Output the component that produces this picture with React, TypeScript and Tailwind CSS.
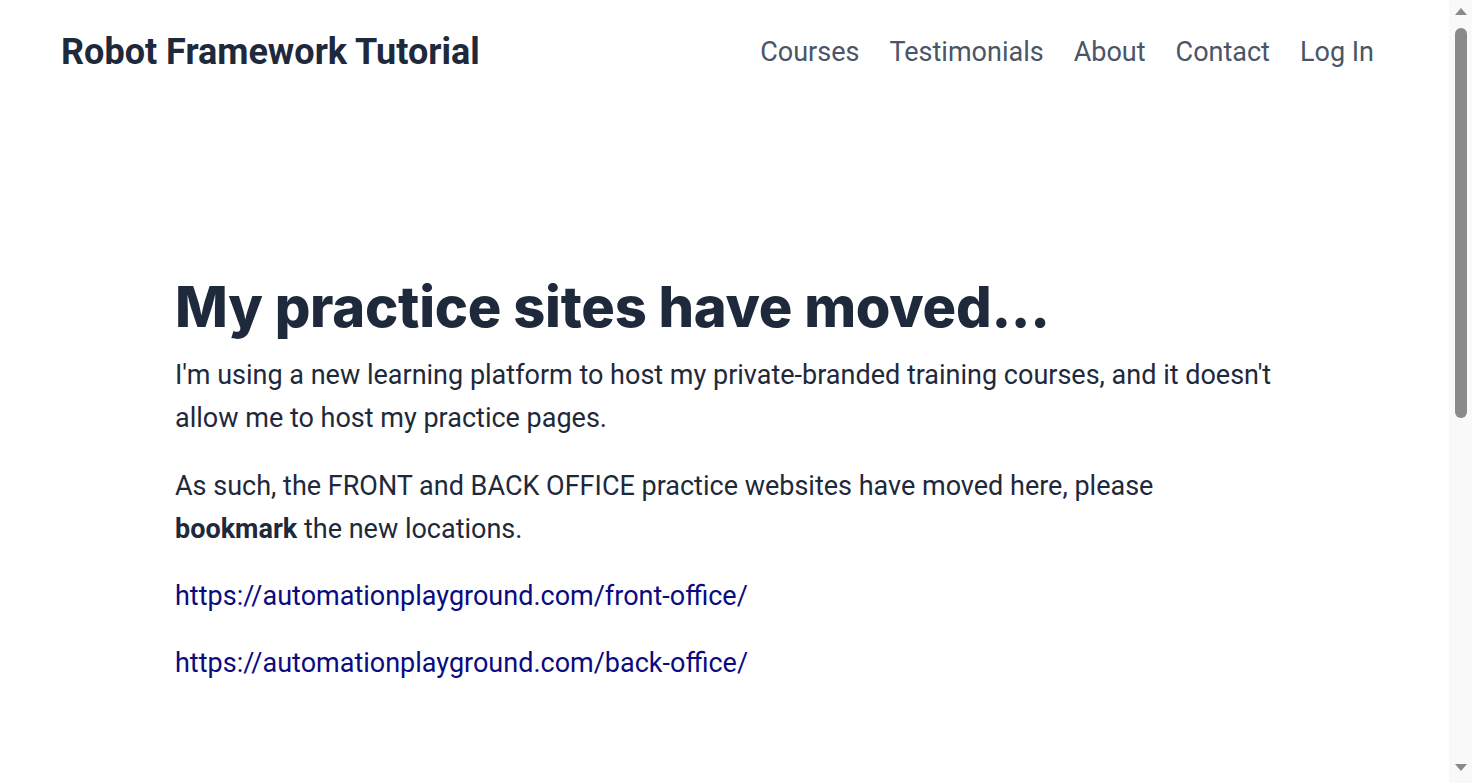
import React from "react";

function Scrollbar() {
  return (
    <div className="flex h-full w-[23px] shrink-0 flex-col items-center bg-[#f9f9f9]">
      <div className="mt-[8px] h-0 w-0 border-x-[6px] border-b-[7px] border-x-transparent border-b-[#8a8a8a]" />
      <div className="mt-[13px] h-[390px] w-[12px] rounded-full bg-[#8a8a8a]" />
      <div className="flex-1" />
      <div className="mb-[12px] h-0 w-0 border-x-[6px] border-t-[7px] border-x-transparent border-t-[#8a8a8a]" />
    </div>
  );
}

export default function App() {
  return (
    <div className="flex h-[783px] overflow-hidden bg-white text-[#1e293b]" style={{ fontFamily: "Roboto, 'Liberation Sans', sans-serif" }}>
      <div className="min-w-0 flex-1">
        <header className="flex h-[104px] items-center justify-between pl-[61px] pr-[75px]">
          <div className="text-[36px] font-bold text-[#1e293b]">Robot Framework Tutorial</div>
          <nav className="flex items-center gap-[30px] text-[27px] text-[#4a5568]">
            <a>Courses</a>
            <a>Testimonials</a>
            <a>About</a>
            <a>Contact</a>
            <a>Log In</a>
          </nav>
        </header>
        <main className="pl-[175px] pt-[170px]">
          <div className="w-[1102px]">
            <h1 className="mb-[13px] text-[56px] font-extrabold leading-[1.2] tracking-[-0.25px] text-[#1e293b]" style={{ fontFamily: "Inter, 'DejaVu Sans', sans-serif" }}>
              My practice sites have moved...
            </h1>
            <p className="text-[27px] leading-[43px] text-[#1e293b]">
              I'm using a new learning platform to host my private-branded training courses, and it doesn't allow me to host my practice pages.
            </p>
            <p className="mt-[25px] text-[27px] leading-[43px] text-[#1e293b]">
              As such, the FRONT and BACK OFFICE practice websites have moved here, please <strong className="font-bold">bookmark</strong> the new locations.
            </p>
            <p className="mt-[24px] text-[27px] leading-[43px]">
              <a className="text-[#0b0b80]">https://automationplayground.com/front-office/</a>
            </p>
            <p className="mt-[24px] text-[27px] leading-[43px]">
              <a className="text-[#0b0b80]">https://automationplayground.com/back-office/</a>
            </p>
          </div>
        </main>
      </div>
      <Scrollbar />
    </div>
  );
}
